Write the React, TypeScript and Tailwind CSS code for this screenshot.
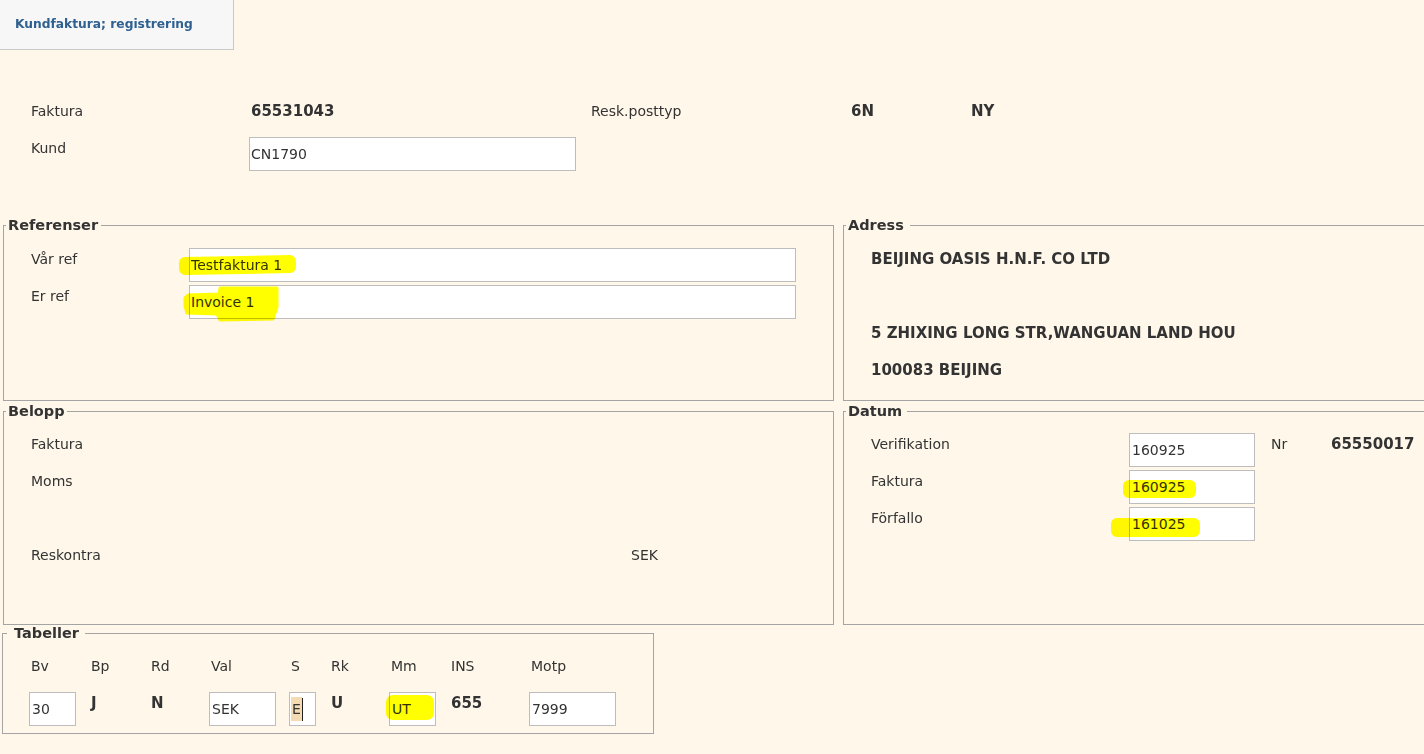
import type { ReactNode } from "react";

const box = "h-[34px] bg-white border border-[#bdbdbd] flex items-center pl-[1px] leading-[18px]";
const hl = "absolute bg-[#ffff00] mix-blend-multiply pointer-events-none";
const val = "pl-[2px] pt-[2px] leading-[18px] font-bold text-[15px]";

function Legend({ children, cls = "ml-[2px] pl-[2px] pr-[3px]" }: { children: ReactNode; cls?: string }) {
  return <legend className={`${cls} font-bold text-[14.5px] leading-[18px] text-[#333]`}>{children}</legend>;
}

function Label({ children, w }: { children?: ReactNode; w: string }) {
  return <div className={`${w} shrink-0 pt-[2px] leading-[18px]`}>{children}</div>;
}

export default function App() {
  return (
    <div className="h-screen w-full overflow-hidden bg-[#fef7ea] text-[#333] text-[14px] font-['DejaVu_Sans',sans-serif]">
      {/* tab */}
      <div className="w-[234px] h-[50px] bg-[#f7f7f7] border-r border-b border-[#c8c8c8] flex items-center pl-[15px] text-[#2f6090] font-bold text-[12.25px]">
        Kundfaktura; registrering
      </div>

      {/* header */}
      <div className="mt-[52px] pl-[31px] grid grid-cols-[218px_342px_260px_120px_auto] leading-[18px]">
        <div>Faktura</div>
        <div className="pl-[2px] font-bold text-[15px]">65531043</div>
        <div>Resk.posttyp</div>
        <div className="font-bold text-[15px]">6N</div>
        <div className="font-bold text-[15px]">NY</div>
      </div>
      <div className="mt-[17px] pl-[31px] flex items-start">
        <Label w="w-[218px]">Kund</Label>
        <div className={`${box} w-[327px]`}>CN1790</div>
      </div>

      {/* Referenser / Adress */}
      <div className="mt-[45px] pl-[3px] flex gap-[9px]">
        <fieldset className="w-[831px] h-[185px] shrink-0 border border-[#a4a4a4] min-w-0">
          <Legend>Referenser</Legend>
          <div className="pl-[27px] pt-[14px] flex flex-col gap-[3px]">
            <div className="flex items-start">
              <Label w="w-[158px]">Vår ref</Label>
              <div className={`${box} w-[607px] relative`}>
                Testfaktura 1
                <span className={`${hl} left-[-11px] top-[7px] w-[117px] h-[18px] rounded-[6px] -rotate-1`} />
              </div>
            </div>
            <div className="flex items-start">
              <Label w="w-[158px]">Er ref</Label>
              <div className={`${box} w-[607px] relative`}>
                Invoice 1
                <svg className="absolute left-[-7px] top-0 w-[97px] h-[36px] mix-blend-multiply pointer-events-none" viewBox="0 0 97 36">
                  <path
                    d="M37 2 L94 2 L94 21 L90 33 L37 34 L34 28 L4 27 L2 20 L2 12 L5 9 L36 8 Z"
                    fill="#ffff00"
                    stroke="#ffff00"
                    strokeWidth="3"
                    strokeLinejoin="round"
                  />
                </svg>
              </div>
            </div>
          </div>
        </fieldset>
        <fieldset className="w-[640px] h-[185px] shrink-0 border border-[#a4a4a4] min-w-0">
          <Legend cls="ml-[2px] pl-[2px] pr-[6px]">Adress</Legend>
          <div className="pl-[27px] pt-[14px] flex flex-col gap-[3px] font-bold text-[15px]">
            <div className="h-[34px]"><Label w="w-auto">BEIJING OASIS H.N.F. CO LTD</Label></div>
            <div className="h-[34px]" />
            <div className="h-[34px]"><Label w="w-auto">5 ZHIXING LONG STR,WANGUAN LAND HOU</Label></div>
            <div className="h-[34px]"><Label w="w-auto">100083 BEIJING</Label></div>
          </div>
        </fieldset>
      </div>

      {/* Belopp / Datum */}
      <div className="mt-[1px] pl-[3px] flex gap-[9px]">
        <fieldset className="w-[831px] h-[223px] shrink-0 border border-[#a4a4a4] min-w-0">
          <Legend cls="ml-[2px] pl-[2px] pr-[2px]">Belopp</Legend>
          <div className="pl-[27px] pt-[13px] flex flex-col gap-[3px]">
            <div className="h-[34px] flex"><Label w="w-[600px]">Faktura</Label></div>
            <div className="h-[34px] flex"><Label w="w-[600px]">Moms</Label></div>
            <div className="h-[34px]" />
            <div className="h-[34px] flex">
              <Label w="w-[600px]">Reskontra</Label>
              <Label w="w-auto">SEK</Label>
            </div>
          </div>
        </fieldset>
        <fieldset className="w-[640px] h-[223px] shrink-0 border border-[#a4a4a4] min-w-0">
          <Legend cls="ml-[2px] pl-[2px] pr-[5px]">Datum</Legend>
          <div className="pl-[27px] pt-[13px] flex flex-col gap-[3px]">
            <div className="flex items-start">
              <Label w="w-[258px]">Verifikation</Label>
              <div className={`${box} w-[126px] pl-[2px]`}>160925</div>
              <Label w="w-[60px] ml-[16px]">Nr</Label>
              <div className="pt-[2px] leading-[18px] font-bold text-[15px]">65550017</div>
            </div>
            <div className="flex items-start">
              <Label w="w-[258px]">Faktura</Label>
              <div className={`${box} w-[126px] pl-[2px] relative`}>
                160925
                <span className={`${hl} left-[-7px] top-[9px] w-[73px] h-[18px] rounded-[6px]`} />
              </div>
            </div>
            <div className="flex items-start">
              <Label w="w-[258px]">Förfallo</Label>
              <div className={`${box} w-[126px] pl-[2px] relative`}>
                161025
                <span className={`${hl} left-[-19px] top-[10px] w-[89px] h-[19px] rounded-[6px]`} />
              </div>
            </div>
          </div>
        </fieldset>
      </div>

      {/* Tabeller */}
      <fieldset className="-mt-[1px] ml-[2px] w-[652px] border border-[#a4a4a4] min-w-0 pb-[7px]">
        <Legend cls="ml-[4px] pl-[7px] pr-[6px]">Tabeller</Legend>
        <div className="pl-[26px] pt-[15px] grid grid-cols-[60px_60px_60px_80px_40px_60px_60px_80px_86px] leading-[18px]">
          {["Bv", "Bp", "Rd", "Val", "S", "Rk", "Mm", "INS", "Motp"].map((h) => (
            <div key={h} className="pl-[2px]">{h}</div>
          ))}
        </div>
        <div className="pl-[26px] mt-[17px] grid grid-cols-[60px_60px_60px_80px_40px_60px_60px_80px_86px] items-start">
          <div className={`${box} w-[47px] pl-[2px]`}>30</div>
          <div className={val}>J</div>
          <div className={val}>N</div>
          <div className={`${box} w-[67px] pl-[2px]`}>SEK</div>
          <div className={`${box} w-[27px]`}>
            <span className="bg-[#f4dbb4] h-[24px] flex items-center pl-[1px] pr-[1px]">E</span>
            <span className="w-px h-[23px] bg-[#222]" />
          </div>
          <div className={val}>U</div>
          <div className={`${box} w-[47px] pl-[2px] relative`}>
            UT
            <span className={`${hl} left-[-4px] top-[2px] w-[48px] h-[25px] rounded-[7px]`} />
          </div>
          <div className={val}>655</div>
          <div className={`${box} w-[87px] pl-[2px]`}>7999</div>
        </div>
      </fieldset>
    </div>
  );
}
